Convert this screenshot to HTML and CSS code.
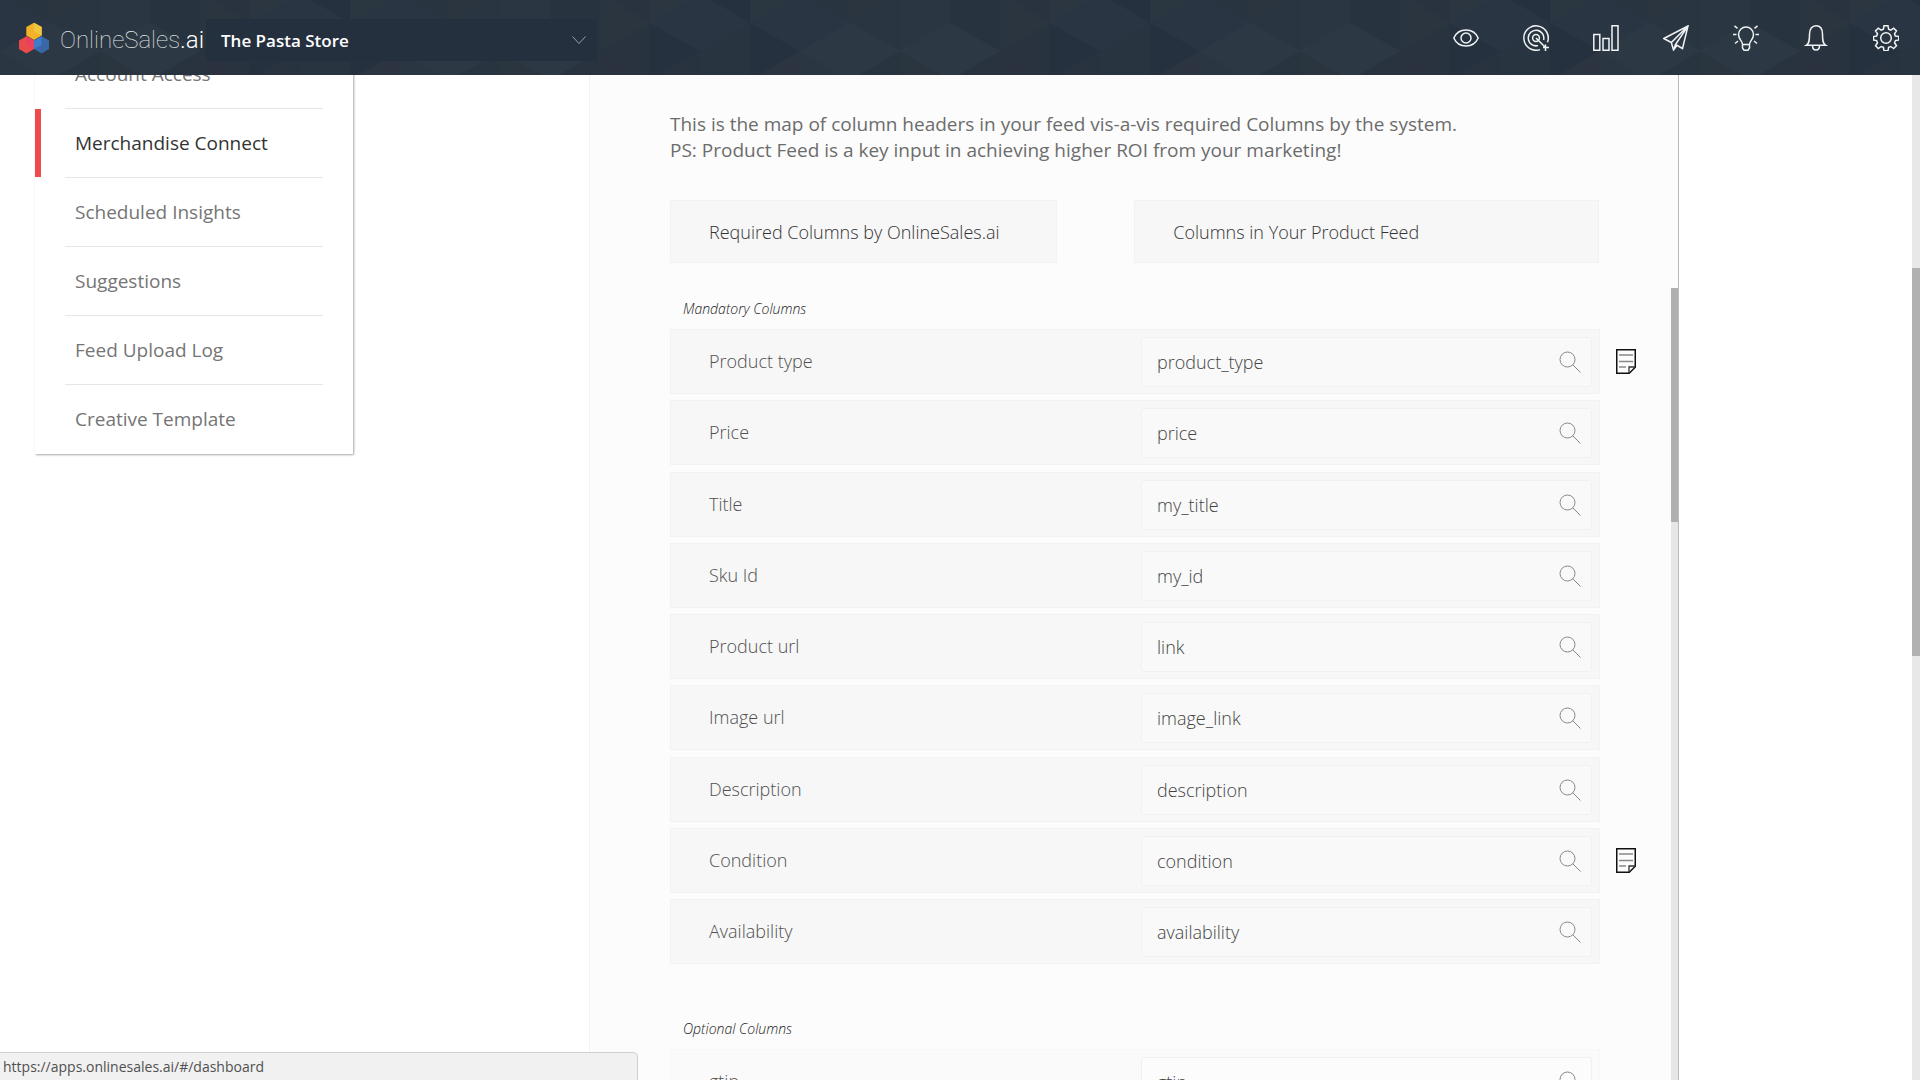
FILE: index.html
```html
<!DOCTYPE html>
<html lang="en">
<head>
    <meta charset="UTF-8">
    <meta name="viewport" content="width=device-width, initial-scale=1.0">
    <title>OnlineSales.ai</title>
    <link rel="stylesheet" href="styles.css">
</head>
<body>
    <svg width="0" height="0" class="sprite" aria-hidden="true">
        <symbol id="icon-search" viewBox="0 0 22 22">
            <circle cx="8.5" cy="8.5" r="7.5"/>
            <path d="M13.8 13.8L21.5 21.5"/>
        </symbol>
        <symbol id="icon-note" viewBox="0 0 20 25">
            <path d="M.75.75h18.5v17.5l-6 6H.75z" stroke="#111" stroke-width="1.5"/>
            <path d="M13 24v-6h6" stroke="#333" stroke-width="1.3"/>
            <path d="M3 6h14M3 12.5h14M3 18h7" stroke="#888" stroke-width="1.5"/>
        </symbol>
    </svg>

    <header class="topbar">
        <svg class="topbar-pattern" aria-hidden="true">
            <defs>
                <pattern id="triangles" x="250" y="0" width="400" height="75" patternUnits="userSpaceOnUse">
                    <g shape-rendering="crispEdges">
                        <path fill="#28333f" d="M0 0h400v75H0z"/>
                        <path fill="#2b3641" d="M0-34V23L50-6z"/>
                        <path fill="#293543" d="M0 23L50-6V51z"/>
                        <path fill="#25313f" d="M0 23V80L50 51z"/>
                        <path fill="#25313f" d="M50-6L100-34V23z"/>
                        <path fill="#293543" d="M50-6V51L100 23z"/>
                        <path fill="#28343f" d="M50 51L100 23V80zM50 51V108L100 80z"/>
                        <path fill="#2a3640" d="M100-34V23L150-6z"/>
                        <path fill="#293542" d="M100 23L150-6V51z"/>
                        <path fill="#25313f" d="M100 23V80L150 51z"/>
                        <path fill="#2b3440" d="M150 51L100 80L150 108z"/>
                        <path fill="#28343f" d="M150-6L200-34V23z"/>
                        <path fill="#293542" d="M150-6V51L200 23z"/>
                        <path fill="#2c3843" d="M150 51L200 23V80z"/>
                        <path fill="#2a3641" d="M150 51V108L200 80z"/>
                        <path fill="#2b3540" d="M200-34V23L250-6z"/>
                        <path fill="#293540" d="M200 23L250-6V51z"/>
                        <path fill="#2c3843" d="M200 23V80L250 51z"/>
                        <path fill="#28343f" d="M250 51L200 80L250 108z"/>
                        <path fill="#2a3641" d="M250-6L300-34V23zM250-6V51L300 23z"/>
                        <path fill="#2c3843" d="M250 51L300 23V80z"/>
                        <path fill="#2a3540" d="M250 51V108L300 80z"/>
                        <path fill="#27333e" d="M300-34V23L350-6z"/>
                        <path fill="#27333e" d="M300 23L350-6V51z"/>
                        <path fill="#2c3843" d="M300 23V80L350 51z"/>
                        <path fill="#2b3540" d="M350-6V51L400 23z"/>
                        <path fill="#29323e" d="M350 51V108L400 80z"/>
                    </g>
                </pattern>
            </defs>
            <rect width="100%" height="100%" fill="url(#triangles)"/>
        </svg>

        <a class="brand" href="#/dashboard">
            <svg class="brand-mark" width="32" height="32" viewBox="0 0 32 32" aria-hidden="true">
                <path fill="#f2b32b" d="M16 .8l7.700 4.200v8.500L16 18l-7.700-4.500V5z"/>
                <path fill="#f0c540" d="M16 .8l7.700 4.200v8.500L16 9.500z"/>
                <path fill="#ea4a4c" d="M8.500 14.300l7.500 4.200v8.500l-7.500 4.500L1 27v-8.500z"/>
                <path fill="#e9405f" d="M8.500 14.300l7.500 4.200v8.500l-7.500-4z"/>
                <path fill="#3b66a8" d="M23.500 14.300l7.500 4.200v8.500l-7.500 4.500L16 27v-8.500z"/>
                <path fill="#3e7cc8" d="M23.500 14.300v8.700L16 27v-8.500z"/>
            </svg>
            <span class="brand-name">OnlineSales<span class="brand-tld">.ai</span></span>
        </a>

        <button class="store-picker" type="button">
            <span>The Pasta Store</span>
            <svg width="14" height="8" viewBox="0 0 14 8" aria-hidden="true"><path d="M.5.500L7 7.500 13.500.500"/></svg>
        </button>

        <nav class="tools" aria-label="Tools">
            <a href="#/overview" aria-label="Overview">
                <svg viewBox="0 0 26 26"><path d="M.8 13C3 8 7.500 5 13 5s10 3 12.200 8C23 18 18.500 21 13 21S3 18 .8 13z"/><circle cx="13" cy="13" r="5"/></svg>
            </a>
            <a href="#/targeting" aria-label="Targeting">
                <svg viewBox="0 0 26 26"><path d="M17 24.600A12.200 12.200 0 1 1 24.500 17.300"/><path d="M15 20.600A7.800 7.800 0 1 1 20.600 15"/><circle cx="13" cy="13" r="3.400"/><path d="M13 13L22.500 22.500M22.500 19.500v3h3.500M20 22.500h2.500V26"/></svg>
            </a>
            <a href="#/reports" aria-label="Reports">
                <svg viewBox="0 0 26 26"><path d="M.8 9.500h6v15.700h-6zM10 13.500h6v11.700h-6zM19 .8h6v24.400h-6z"/></svg>
            </a>
            <a href="#/campaigns" aria-label="Campaigns">
                <svg viewBox="0 0 26 26"><path d="M25 1L.8 13.500l7.500 4L25 1l-5.500 22.500-7-4L25 1M8.300 17.500L10.500 25l3.500-4.700M10.500 25l2-5.500"/></svg>
            </a>
            <a href="#/ideas" aria-label="Ideas">
                <svg viewBox="0 0 26 26"><path d="M9.500 19.500c0-3.500-4-5-4-10a7.500 7.500 0 0 1 15 0c0 5-4 6.500-4 10zM9.500 19.500V23l1.500 2.200h4l1.500-2.200v-3.500"/><path d="M0 9.500h3.500M22.500 9.500H26M1.500.8l3 2.500M24.500.8l-3 2.500M2 18.500l3-2.500M24 18.500l-3-2.500"/></svg>
            </a>
            <a href="#/notifications" aria-label="Notifications">
                <svg viewBox="0 0 26 26"><path d="M3.500 20.200c2.500-1.500 3-4 3-11C6.500 4 9 .8 13 .8s6.500 3.200 6.500 8.400c0 7 .5 9.500 3 11zM9.500 20.500c0 6 7 6 7 0"/></svg>
            </a>
            <a href="#/settings" aria-label="Settings">
                <svg viewBox="0 0 26 26"><path d="M11 .8h4l.6 3.400 2.200.9 2.900-2 2.800 2.800-2 2.900.9 2.200 3.400.6v3.400l-3.400.6-.9 2.200 2 2.900-2.800 2.800-2.900-2-2.200.9-.6 3.300h-4l-.6-3.300-2.200-.9-2.900 2-2.800-2.800 2-2.900-.9-2.200L.5 15v-3.400l3.100-.6.9-2.200-2-2.900 2.800-2.800 2.900 2 2.200-.9z"/><circle cx="13" cy="13" r="5.300"/></svg>
            </a>
        </nav>
    </header>

    <main class="page">
        <nav class="sidebar" aria-label="Settings">
            <a href="#/account-access">Account Access</a>
            <a class="active" href="#/merchandise-connect">Merchandise Connect</a>
            <a href="#/scheduled-insights">Scheduled Insights</a>
            <a href="#/suggestions">Suggestions</a>
            <a href="#/feed-upload-log">Feed Upload Log</a>
            <a href="#/creative-template">Creative Template</a>
        </nav>

        <section class="panel">
            <p class="intro">
                This is the map of column headers in your feed vis-a-vis required Columns by the system.<br>
                PS: Product Feed is a key input in achieving higher ROI from your marketing!
            </p>

            <div class="column-heads">
                <div class="column-head">Required Columns by OnlineSales.ai</div>
                <div class="column-head">Columns in Your Product Feed</div>
            </div>

            <h2 class="group-title">Mandatory Columns</h2>
            <div class="mapping mandatory">
                <div class="row">
                    <div class="card">
                        <label for="product_type">Product type</label>
                        <div class="field">
                            <input id="product_type" type="text" value="product_type">
                            <button type="button" aria-label="Search"><svg><use href="#icon-search"/></svg></button>
                        </div>
                    </div>
                    <button class="note" type="button" aria-label="Note"><svg><use href="#icon-note"/></svg></button>
                </div>
                <div class="row">
                    <div class="card">
                        <label for="price">Price</label>
                        <div class="field">
                            <input id="price" type="text" value="price">
                            <button type="button" aria-label="Search"><svg><use href="#icon-search"/></svg></button>
                        </div>
                    </div>
                </div>
                <div class="row">
                    <div class="card">
                        <label for="title">Title</label>
                        <div class="field">
                            <input id="title" type="text" value="my_title">
                            <button type="button" aria-label="Search"><svg><use href="#icon-search"/></svg></button>
                        </div>
                    </div>
                </div>
                <div class="row">
                    <div class="card">
                        <label for="sku_id">Sku Id</label>
                        <div class="field">
                            <input id="sku_id" type="text" value="my_id">
                            <button type="button" aria-label="Search"><svg><use href="#icon-search"/></svg></button>
                        </div>
                    </div>
                </div>
                <div class="row">
                    <div class="card">
                        <label for="product_url">Product url</label>
                        <div class="field">
                            <input id="product_url" type="text" value="link">
                            <button type="button" aria-label="Search"><svg><use href="#icon-search"/></svg></button>
                        </div>
                    </div>
                </div>
                <div class="row">
                    <div class="card">
                        <label for="image_url">Image url</label>
                        <div class="field">
                            <input id="image_url" type="text" value="image_link">
                            <button type="button" aria-label="Search"><svg><use href="#icon-search"/></svg></button>
                        </div>
                    </div>
                </div>
                <div class="row">
                    <div class="card">
                        <label for="description">Description</label>
                        <div class="field">
                            <input id="description" type="text" value="description">
                            <button type="button" aria-label="Search"><svg><use href="#icon-search"/></svg></button>
                        </div>
                    </div>
                </div>
                <div class="row">
                    <div class="card">
                        <label for="condition">Condition</label>
                        <div class="field">
                            <input id="condition" type="text" value="condition">
                            <button type="button" aria-label="Search"><svg><use href="#icon-search"/></svg></button>
                        </div>
                    </div>
                    <button class="note" type="button" aria-label="Note"><svg><use href="#icon-note"/></svg></button>
                </div>
                <div class="row">
                    <div class="card">
                        <label for="availability">Availability</label>
                        <div class="field">
                            <input id="availability" type="text" value="availability">
                            <button type="button" aria-label="Search"><svg><use href="#icon-search"/></svg></button>
                        </div>
                    </div>
                </div>
            </div>

            <h2 class="group-title">Optional Columns</h2>
            <div class="mapping optional">
                <div class="row">
                    <div class="card">
                        <label for="gtin">gtin</label>
                        <div class="field">
                            <input id="gtin" type="text" value="gtin">
                            <button type="button" aria-label="Search"><svg><use href="#icon-search"/></svg></button>
                        </div>
                    </div>
                </div>
            </div>

            <div class="panel-scroll"><div class="panel-thumb"></div></div>
        </section>
    </main>

    <div class="page-scroll"><div class="page-thumb"></div></div>
    <div class="status">https://apps.onlinesales.ai/#/dashboard</div>
</body>
</html>
```
FILE: styles.css
```css
* {
    box-sizing: border-box;
}

body {
    margin: 0;
    height: 100vh;
    overflow: hidden;
    background: #fff;
    color: #505050;
    font-family: 'Open Sans', 'Noto Sans', sans-serif;
    font-weight: 300;
    font-size: 18px;
}

a {
    color: inherit;
    text-decoration: none;
}

button {
    padding: 0;
    border: none;
    background: none;
    font: inherit;
    cursor: pointer;
}

svg {
    display: block;
    flex-shrink: 0;
    fill: none;
}

.sprite {
    position: absolute;
}

/* top bar */
.topbar {
    position: fixed;
    top: 0;
    left: 0;
    right: 0;
    z-index: 10;
    height: 75px;
    padding: 0 21px 0 18px;
    display: flex;
    align-items: center;
    background: #28333f;
}

.topbar-pattern {
    position: absolute;
    top: 0;
    left: 0;
    width: 100%;
    height: 100%;
    z-index: -1;
}

.brand {
    display: flex;
    align-items: center;
    gap: 10px;
    width: 188px;
}

.brand-name {
    padding-top: 5px;
    font-family: Roboto, sans-serif;
    font-weight: 100;
    font-size: 24px;
    line-height: 40px;
    color: #e2e6e9;
}

.brand-tld {
    font-weight: 300;
    color: #fff;
}

.store-picker {
    display: flex;
    align-items: center;
    justify-content: space-between;
    width: 391px;
    height: 42px;
    margin-top: 5px;
    padding: 0 11px 0 15px;
    background: #25303f;
    color: #fff;
    font-weight: 600;
    font-size: 17px;
}

.store-picker svg {
    stroke: #98a0a8;
}

.tools {
    margin-left: auto;
    display: flex;
    gap: 44px;
}

.tools svg {
    width: 26px;
    height: 26px;
    stroke: #f0f2f3;
    stroke-width: 1.5;
}

/* page */
.page {
    display: flex;
    align-items: flex-start;
    gap: 236px;
    padding: 0 241px 0 35px;
}

.sidebar {
    flex: 0 0 318px;
    margin-top: 40px;
    display: flex;
    flex-direction: column;
    background: #fff;
    box-shadow: 1px 1px 2px rgba(0, 0, 0, 0.35);
    color: #757575;
    font-size: 19px;
    font-weight: 400;
}

.sidebar a {
    position: relative;
    margin: 0 30px;
    padding: 0 10px;
    line-height: 68px;
    border-bottom: 1px solid #e6e6e6;
}

.sidebar a:last-child {
    border-color: transparent;
}

.sidebar .active {
    color: #333;
}

.sidebar .active::before {
    content: "";
    position: absolute;
    top: 0;
    bottom: 0;
    left: -30px;
    width: 6px;
    background: #f04b4c;
}

.panel {
    position: relative;
    flex: 1;
    min-width: 0;
    height: 100vh;
    overflow: hidden;
    padding: 111px 42px 0 80px;
    background: #fcfcfc;
    border-left: 1px solid #f3f3f3;
    border-right: 1px solid #bbb;
}

.intro {
    margin: 0 0 37px;
    color: #6c6c6c;
    font-size: 19px;
    font-weight: 400;
    line-height: 26px;
}

.column-heads {
    display: grid;
    grid-template-columns: 5fr 6fr;
    gap: 77px;
    margin-right: 37px;
}

.column-head {
    padding: 1px 38px 0;
    line-height: 60px;
    background: #f7f7f7;
    border: 1px solid #f2f2f2;
    color: #333;
}

.group-title {
    margin: 36px 0 10px 13px;
    font-size: 14px;
    line-height: 20px;
    font-weight: 300;
    font-style: italic;
    color: #222;
}

.mapping {
    display: flex;
    flex-direction: column;
    justify-content: space-between;
}

.mandatory {
    min-height: 635px;
    margin-bottom: 55px;
}

.row {
    display: grid;
    grid-template-columns: 1fr 20px;
    align-items: center;
    gap: 16px;
}

.card {
    display: flex;
    align-items: center;
    padding: 7px 7px 6px 38px;
    background: #f7f7f7;
    border: 1px solid #f2f2f2;
}

.card label {
    flex: 1;
    padding-bottom: 2px;
}

.field {
    position: relative;
    flex: 0 0 451px;
}

.field input {
    display: block;
    width: 100%;
    height: 50px;
    padding: 0 48px 0 15px;
    background: #f9f9f9;
    border: 1px solid #f1f1f1;
    border-radius: 3px;
    color: #444;
    font: inherit;
}

.field button {
    position: absolute;
    top: 14px;
    right: 11px;
}

.field svg {
    width: 22px;
    height: 22px;
    stroke: #888;
}

.note svg {
    width: 20px;
    height: 25px;
}

.optional .card {
    background: #fafafa;
    border-color: #f7f7f7;
}

.optional input {
    background: #fcfcfc;
}

/* scrollbars */
.panel-scroll {
    position: absolute;
    top: 288px;
    right: 0;
    bottom: 0;
    width: 7px;
    background: #e6e6e6;
}

.panel-thumb {
    height: 234px;
    background: #afafaf;
}

.page-scroll {
    position: fixed;
    top: 0;
    right: 0;
    bottom: 0;
    width: 8px;
    padding-top: 268px;
    background: #e8e8e8;
}

.page-thumb {
    height: 388px;
    background: #b1b1b1;
}

.status {
    position: fixed;
    left: 0;
    bottom: 0;
    width: 638px;
    height: 28px;
    padding-left: 3px;
    background: #f1f1f1;
    border: 1px solid #d0d0d0;
    border-left: none;
    border-bottom: none;
    border-radius: 0 5px 0 0;
    font-family: 'Open Sans', sans-serif;
    font-weight: 400;
    font-size: 14px;
    line-height: 28px;
}
```
